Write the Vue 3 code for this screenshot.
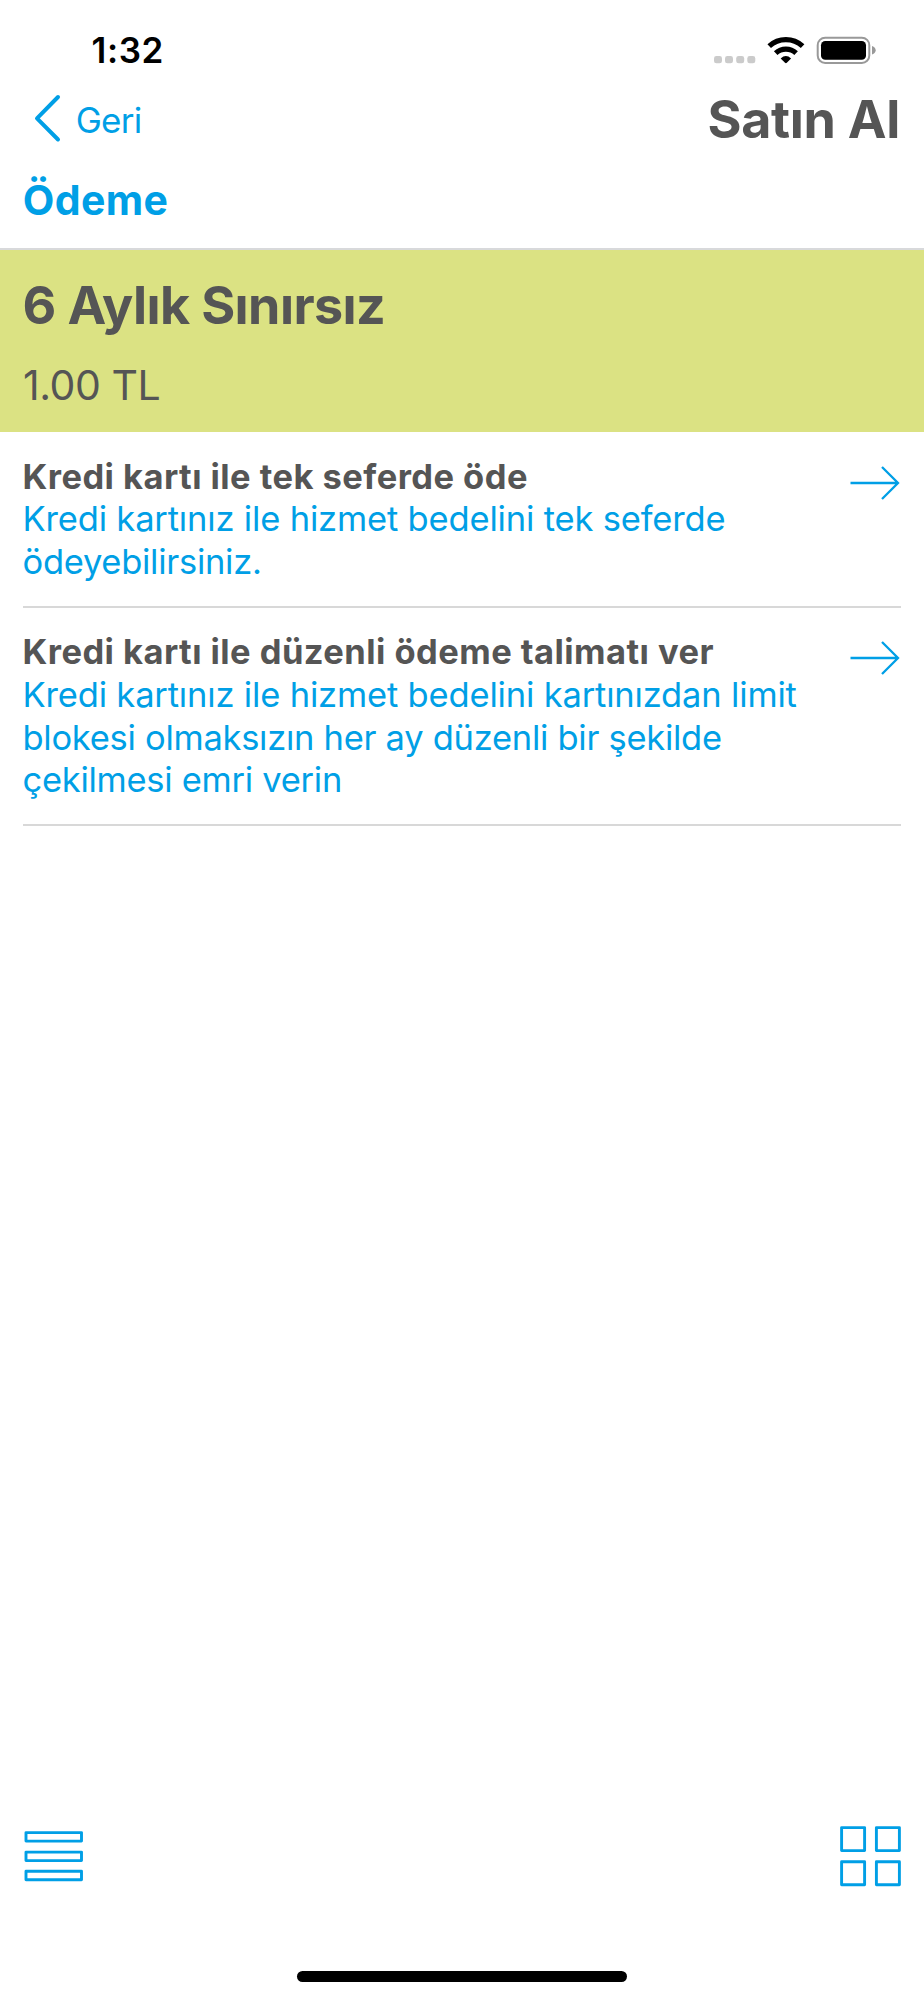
<script setup>
const options = [
  {
    title: 'Kredi kartı ile tek seferde öde',
    text: 'Kredi kartınız ile hizmet bedelini tek seferde\nödeyebilirsiniz.',
  },
  {
    title: 'Kredi kartı ile düzenli ödeme talimatı ver',
    text: 'Kredi kartınız ile hizmet bedelini kartınızdan limit\nblokesi olmaksızın her ay düzenli bir şekilde\nçekilmesi emri verin',
  },
]
</script>

<template>
  <main class="screen">
    <div class="status">
      <span class="time">1:32</span>
      <svg class="indicators" width="164" height="30" viewBox="713 35 164 30">
        <g fill="#cbcbcb">
          <rect x="714" y="56" width="8" height="7.3" rx="2.4" />
          <rect x="725" y="56" width="8" height="7.3" rx="2.4" />
          <rect x="736.2" y="56" width="8" height="7.3" rx="2.4" />
          <rect x="747.3" y="56" width="8" height="7.3" rx="2.4" />
        </g>
        <g fill="none" stroke="#000" stroke-width="5.2">
          <path d="M769.2 46.2 A24.5 24.5 0 0 1 802.6 46.2" />
          <path d="M775.7 53.2 A15 15 0 0 1 796.1 53.2" />
        </g>
        <path d="M780.7 58.4 Q785.9 53.8 791.1 58.4 L786.8 62.8 Q785.9 63.7 785 62.8 Z" />
        <rect x="817.7" y="37.7" width="51.6" height="25.3" rx="7.5" fill="none" stroke="#999" stroke-width="2" />
        <rect x="821" y="41" width="45" height="18.8" rx="4.3" />
        <path d="M872 46 Q875.7 47.4 875.7 50.2 Q875.7 53 872 54.4 Z" fill="#999" />
      </svg>
    </div>

    <header class="nav">
      <button class="back">
        <svg width="28" height="50" viewBox="0 0 28 50">
          <path d="M24 4 L3 25.3 L24 46.5" fill="none" stroke="#009fe6" stroke-width="4" stroke-linecap="round" stroke-linejoin="round" />
        </svg>
        <span>Geri</span>
      </button>
      <h1>Satın Al</h1>
    </header>

    <h2 class="section">Ödeme</h2>

    <section class="plan">
      <div class="plan-name">6 Aylık Sınırsız</div>
      <div class="price">1.00 TL</div>
    </section>

    <ul class="options">
      <li v-for="option in options" :key="option.title">
        <div>
          <h3>{{ option.title }}</h3>
          <p>{{ option.text }}</p>
        </div>
        <svg class="arrow" width="50" height="36" viewBox="0 0 50 36">
          <path d="M0.5 18 H48 M32 2 L48 18 L32 34" fill="none" stroke="#009fe6" stroke-width="2.3" />
        </svg>
      </li>
    </ul>

    <footer class="tabs">
      <svg width="60" height="62" viewBox="24 1825 60 62" fill="none" stroke="#009fe6" stroke-width="2.9" stroke-linejoin="round">
        <rect x="26" y="1832.6" width="55.5" height="8.5" />
        <rect x="26" y="1852.1" width="55.5" height="8.5" />
        <rect x="26" y="1871.3" width="55.5" height="8.5" />
      </svg>
      <svg width="62" height="62" viewBox="840 1825 62 62" fill="none" stroke="#009fe6" stroke-width="2.9" stroke-linejoin="round">
        <rect x="841.6" y="1827.6" width="23" height="23" />
        <rect x="876.4" y="1827.6" width="23" height="23" />
        <rect x="841.6" y="1861.8" width="23" height="23" />
        <rect x="876.4" y="1861.8" width="23" height="23" />
      </svg>
    </footer>
    <div class="home"></div>
  </main>
</template>

<style>
body { background: #fff; }
</style>

<style scoped>
* { box-sizing: border-box; margin: 0; padding: 0; }
.screen {
  width: 924px;
  height: 2000px;
  display: flex;
  flex-direction: column;
  overflow: hidden;
  background: #fff;
  color: #555;
  font-family: Inter, sans-serif;
}
.status {
  display: flex;
  justify-content: space-between;
  align-items: flex-start;
  height: 89.4px;
  padding: 28.2px 47px 0 91.5px;
}
.time { font-size: 35px; line-height: 44px; font-weight: 600; letter-spacing: 0.6px; color: #000; }
.indicators { margin-top: 6.8px; }
.nav {
  display: flex;
  justify-content: space-between;
  align-items: flex-start;
  height: 85.6px;
  padding: 0 24px 0 33.5px;
}
.back {
  display: flex;
  gap: 14.2px;
  margin-top: 3.6px;
  border: 0;
  background: none;
  color: #009fe6;
  font-family: inherit;
  font-size: 35px;
  font-weight: 400;
  line-height: 44px;
  letter-spacing: -0.73px;
}
.back span { margin-top: 5px; }
h1 { margin-top: 1px; font-size: 52px; line-height: 60px; font-weight: 650; letter-spacing: -0.3px; }
.section {
  height: 75px;
  padding-left: 22.8px;
  border-bottom: 2px solid #d8d9db;
  color: #009fe6;
  font-size: 41px;
  line-height: 50px;
  font-weight: 700;
  letter-spacing: 0.33px;
}
.plan { height: 182px; padding: 25.6px 0 0 22.5px; background: #dbe283; }
.plan-name { font-size: 52px; line-height: 60px; font-weight: 700; letter-spacing: -0.6px; }
.price { margin-top: 24.4px; padding-left: 0.5px; font-size: 41px; line-height: 50px; letter-spacing: -0.45px; }
.options { margin: 0 23px 0 22.5px; list-style: none; }
.options li {
  display: flex;
  justify-content: space-between;
  align-items: flex-start;
  padding: 23.8px 0 21.9px;
  border-bottom: 2px solid #d8d8d8;
}
h3, p { font-size: 34.5px; line-height: 42.65px; }
h3 { font-weight: 700; letter-spacing: 0.44px; }
p { color: #009fe6; white-space: pre-line; letter-spacing: -0.28px; }
p::first-line { letter-spacing: -0.17px; }
.arrow { margin: 8.9px 1.3px 0 0; flex: none; }
.tabs {
  display: flex;
  justify-content: space-between;
  margin-top: auto;
  padding: 0 22px 84px 24px;
}
.home { width: 330px; height: 11px; margin: 0 auto 18px; border-radius: 5.5px; background: #000; flex: none; }
</style>
